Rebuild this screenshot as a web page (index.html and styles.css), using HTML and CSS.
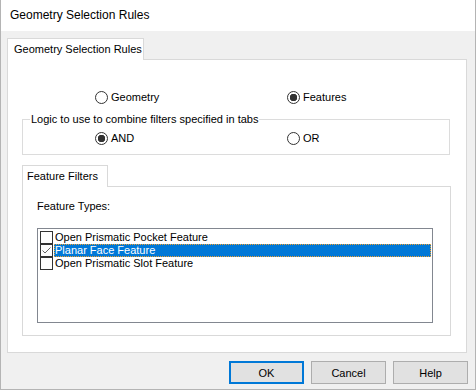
FILE: index.html
```html
<!DOCTYPE html>
<html lang="en">
<head>
  <meta charset="UTF-8">
  <title>Geometry Selection Rules</title>
  <link rel="stylesheet" href="styles.css">
</head>
<body>

<div class="window">
  <div class="titlebar">Geometry Selection Rules</div>

  <div class="content">
    <div class="tab">Geometry Selection Rules</div>
    <div class="panel">
      <div class="radio-row">
        <label class="radio"><input type="radio" name="mode"> Geometry</label>
        <label class="radio"><input type="radio" name="mode" checked> Features</label>
      </div>

      <fieldset class="group">
        <legend>Logic to use to combine filters specified in tabs</legend>
        <div class="radio-row">
          <label class="radio"><input type="radio" name="logic" checked> AND</label>
          <label class="radio"><input type="radio" name="logic"> OR</label>
        </div>
      </fieldset>

      <div class="sub-tabs">
        <div class="tab small">Feature Filters</div>
        <div class="sub-panel">
          <div class="label">Feature Types:</div>
          <ul class="listbox">
            <li><span class="check"></span><span class="item">Open Prismatic Pocket Feature</span></li>
            <li class="selected">
              <span class="check">
                <svg width="11" height="11" viewBox="0 0 11 11"><polyline points="1.5,5.5 4,8 9.5,2.5" fill="none" stroke="#666" stroke-width="1"/></svg>
              </span>
              <span class="item">Planar Face Feature</span>
            </li>
            <li><span class="check"></span><span class="item">Open Prismatic Slot Feature</span></li>
          </ul>
        </div>
      </div>
    </div>
  </div>

  <div class="buttons">
    <button class="default">OK</button>
    <button>Cancel</button>
    <button>Help</button>
  </div>
</div>

</body>
</html>
```

FILE: styles.css
```css
body {
  margin: 0;
  font-family: "Liberation Sans", Arial, sans-serif;
  font-size: 11px;
  color: #000;
}
.window {
  width: 476px;
  height: 390px;
  box-sizing: border-box;
  border: 1px solid #b4b4b4;
  border-top: none;
  background: #f0f0f0;
}
.titlebar {
  height: 31px;
  line-height: 31px;
  padding-left: 9px;
  background: #fff;
  font-size: 12px;
}
.content {
  padding: 7px 8px 0 6px;
}
.tab {
  position: relative;
  box-sizing: border-box;
  width: 137px;
  height: 22px;
  line-height: 21px;
  padding-left: 6px;
  margin-bottom: -1px;
  border: 1px solid #d9d9d9;
  border-bottom: none;
  background: #fff;
}
.tab.small {
  width: 86px;
  padding-left: 4px;
}
.panel {
  box-sizing: border-box;
  width: 460px;
  height: 294px;
  padding-right: 8px;
  border: 1px solid #d9d9d9;
  background: #fff;
  overflow: hidden;
}
.radio-row {
  display: flex;
  height: 13px;
}
.panel > .radio-row {
  margin-top: 31px;
  padding-left: 87px;
}
.group .radio-row {
  padding-left: 72px;
}
.radio {
  display: flex;
  flex: none;
  align-items: center;
  gap: 3px;
  width: 192px;
  line-height: 13px;
}
.radio input {
  appearance: none;
  width: 13px;
  height: 13px;
  margin: 0;
  box-sizing: border-box;
  border: 1px solid #333;
  border-radius: 50%;
  background: #fff;
}
.radio input:checked {
  background: radial-gradient(circle, #333 0 3.5px, #fff 4px);
}
.group {
  margin: 9px 8px 0 14px;
  padding: 6px 0 9px 0;
  min-width: 0;
  border: 1px solid #dcdcdc;
}
.group legend {
  margin-left: 7px;
  padding: 0 1px;
  line-height: 13px;
}
.sub-tabs {
  margin: 10px 7px 0 14px;
}
.sub-panel {
  box-sizing: border-box;
  height: 150px;
  padding: 13px 0 0 14px;
  border: 1px solid #d9d9d9;
}
.label {
  line-height: 13px;
}
.listbox {
  box-sizing: border-box;
  width: 396px;
  height: 95px;
  margin: 15px 0 0 0;
  padding: 2px 0 0 2px;
  list-style: none;
  border: 1px solid #828790;
}
.listbox li {
  display: flex;
  height: 13px;
  line-height: 13px;
}
.check {
  display: flex;
  align-items: center;
  justify-content: center;
  flex: none;
  width: 13px;
  height: 13px;
  box-sizing: border-box;
  border: 1px solid #333;
  background: #fff;
}
.item {
  flex: 1;
  margin: 0 1px 0 1px;
  padding-left: 1px;
  white-space: nowrap;
}
.selected .item {
  background: #0078d7;
  color: #fff;
  outline: 1px dotted #f0a030;
  outline-offset: -1px;
}
.buttons {
  display: flex;
  justify-content: flex-end;
  gap: 7px;
  padding: 8px 7px 0 0;
}
.buttons button {
  width: 75px;
  height: 23px;
  box-sizing: border-box;
  padding: 0;
  border: 1px solid #adadad;
  background: #e1e1e1;
  font: inherit;
  color: #000;
}
.buttons .default {
  border: 2px solid #0078d7;
}
```
